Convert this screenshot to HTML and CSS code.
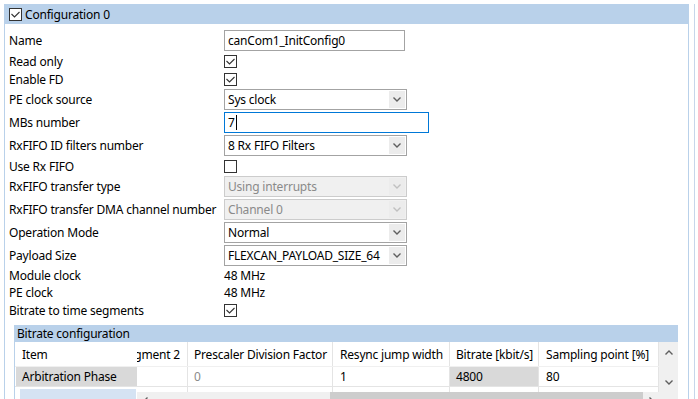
FILE: index.html
```html
<!DOCTYPE html>
<html>
    <head>
        <meta charset="utf-8">
        <title>Configuration 0</title>
        <link rel="stylesheet" href="styles.css">
    </head>
    <body>
        <div class="frame">
            <div class="section">
                <div class="section__title">
                    <span class="check is-checked"><svg viewBox="0 0 13 13"><path d="M2.5 6 L5.5 9 L10.5 4"/></svg></span>
                    <span>Configuration 0</span>
                </div>
                <div class="section__body">
                    <div class="form">
                        <div class="row">
                            <span class="row__label">Name</span>
                            <span class="field field--name">canCom1_InitConfig0</span>
                        </div>
                        <div class="row row--check">
                            <span class="row__label">Read only</span>
                            <span class="check is-checked"><svg viewBox="0 0 13 13"><path d="M2.5 6 L5.5 9 L10.5 4"/></svg></span>
                        </div>
                        <div class="row row--check">
                            <span class="row__label">Enable FD</span>
                            <span class="check is-checked"><svg viewBox="0 0 13 13"><path d="M2.5 6 L5.5 9 L10.5 4"/></svg></span>
                        </div>
                        <div class="row">
                            <span class="row__label">PE clock source</span>
                            <span class="select"><span class="select__value">Sys clock</span><span class="select__btn"><svg viewBox="0 0 8 5"><path d="M0.5 0.5 L4 4 L7.5 0.5"/></svg></span></span>
                        </div>
                        <div class="row">
                            <span class="row__label">MBs number</span>
                            <span class="field field--focus">7<i class="caret"></i></span>
                        </div>
                        <div class="row">
                            <span class="row__label">RxFIFO ID filters number</span>
                            <span class="select"><span class="select__value">8 Rx FIFO Filters</span><span class="select__btn"><svg viewBox="0 0 8 5"><path d="M0.5 0.5 L4 4 L7.5 0.5"/></svg></span></span>
                        </div>
                        <div class="row row--check">
                            <span class="row__label">Use Rx FIFO</span>
                            <span class="check"></span>
                        </div>
                        <div class="row">
                            <span class="row__label">RxFIFO transfer type</span>
                            <span class="select is-disabled"><span class="select__value">Using interrupts</span><span class="select__btn"><svg viewBox="0 0 8 5"><path d="M0.5 0.5 L4 4 L7.5 0.5"/></svg></span></span>
                        </div>
                        <div class="row">
                            <span class="row__label">RxFIFO transfer DMA channel number</span>
                            <span class="select is-disabled"><span class="select__value">Channel 0</span><span class="select__btn"><svg viewBox="0 0 8 5"><path d="M0.5 0.5 L4 4 L7.5 0.5"/></svg></span></span>
                        </div>
                        <div class="row">
                            <span class="row__label">Operation Mode</span>
                            <span class="select"><span class="select__value">Normal</span><span class="select__btn"><svg viewBox="0 0 8 5"><path d="M0.5 0.5 L4 4 L7.5 0.5"/></svg></span></span>
                        </div>
                        <div class="row">
                            <span class="row__label">Payload Size</span>
                            <span class="select"><span class="select__value">FLEXCAN_PAYLOAD_SIZE_64</span><span class="select__btn"><svg viewBox="0 0 8 5"><path d="M0.5 0.5 L4 4 L7.5 0.5"/></svg></span></span>
                        </div>
                        <div class="row row--text">
                            <span class="row__label">Module clock</span>
                            <span>48 MHz</span>
                        </div>
                        <div class="row row--text">
                            <span class="row__label">PE clock</span>
                            <span>48 MHz</span>
                        </div>
                        <div class="row row--check">
                            <span class="row__label">Bitrate to time segments</span>
                            <span class="check is-checked"><svg viewBox="0 0 13 13"><path d="M2.5 6 L5.5 9 L10.5 4"/></svg></span>
                        </div>
                    </div>

                    <div class="group">
                        <div class="group__title">Bitrate configuration</div>
                        <div class="grid">
                            <div class="grid__main">
                                <div class="grid__row grid__row--head">
                                    <span class="cell cell--frozen">Item</span>
                                    <span class="cell cell--seg2">Phase Segment 2</span>
                                    <span class="cell cell--presc">Prescaler Division Factor</span>
                                    <span class="cell cell--resync">Resync jump width</span>
                                    <span class="cell cell--bitrate">Bitrate [kbit/s]</span>
                                    <span class="cell cell--sample">Sampling point [%]</span>
                                </div>
                                <div class="grid__row grid__row--data">
                                    <span class="cell cell--frozen"><span class="cell__fill">Arbitration Phase</span></span>
                                    <span class="cell cell--seg2"></span>
                                    <span class="cell cell--presc is-readonly">0</span>
                                    <span class="cell cell--resync">1</span>
                                    <span class="cell cell--bitrate is-shaded">4800</span>
                                    <span class="cell cell--sample">80</span>
                                </div>
                                <div class="grid__row grid__row--next">
                                    <span class="cell cell--frozen"><span class="cell__sel"></span></span>
                                    <div class="grid__rest">
                                        <div class="grid__row grid__row--stub">
                                            <span class="cell cell--seg2"></span>
                                            <span class="cell cell--presc"></span>
                                            <span class="cell cell--resync"></span>
                                            <span class="cell cell--bitrate"></span>
                                            <span class="cell cell--sample"></span>
                                        </div>
                                        <div class="hscroll">
                                            <span class="hscroll__btn"><svg viewBox="0 0 5 8"><path d="M4.5 0.5 L1 4 L4.5 7.5"/></svg></span>
                                            <span class="hscroll__track"></span>
                                            <span class="hscroll__thumb"></span>
                                            <span class="hscroll__btn"><svg viewBox="0 0 5 8"><path d="M0.5 0.5 L4 4 L0.5 7.5"/></svg></span>
                                        </div>
                                    </div>
                                </div>
                            </div>
                            <div class="vscroll">
                                <span class="vscroll__btn"><svg viewBox="0 0 8 5"><path d="M0.5 4.5 L4 1 L7.5 4.5"/></svg></span>
                                <span class="vscroll__track"></span>
                                <span class="vscroll__btn"><svg viewBox="0 0 8 5"><path d="M0.5 0.5 L4 4 L7.5 0.5"/></svg></span>
                            </div>
                        </div>
                    </div>
                </div>
            </div>
            <div class="edge"></div>
        </div>
    </body>
</html>
```

FILE: styles.css
```css
:root {
    --font-main: 'Noto Sans', 'Liberation Sans', Arial, sans-serif;
    --fz-normal: 12px;

    --color-text: #000;
    --color-muted: #8a8a8a;
    --color-head: #b9d1ea;
    --color-line: #e4e4e4;
    --color-field: #a3a3a3;
    --color-focus: #0078d7;
    --color-btn: #ececec;
    --color-scroll: #f0f0f0;
    --color-thumb: #cdcdcd;
    --color-arrow: #5f5f5f;
}
* {
    box-sizing: border-box;
}
html, body {
    margin: 0;
}
body {
    font-family: var(--font-main);
    font-size: var(--fz-normal);
    letter-spacing: -0.2px;
    color: var(--color-text);
    background: #fff;
    width: 698px;
    height: 399px;
    overflow: hidden;
}
svg {
    display: block;
    fill: none;
}
.frame {
    display: flex;
    height: 399px;
    padding-top: 4px;
}
.section {
    width: 685px;
    margin-left: 4px;
    border-left: 1px solid var(--color-head);
    border-right: 1px solid var(--color-head);
}
.edge {
    width: 1px;
    margin-left: 5px;
    background: #c6d6ea;
}
.section__title {
    display: flex;
    align-items: center;
    gap: 3px;
    height: 20px;
    padding-left: 4px;
    background: var(--color-head);
}

/* checkbox */
.check {
    display: block;
    flex: none;
    width: 13px;
    height: 13px;
    border: 1px solid #333;
    background: #fff;
}
.check svg {
    width: 13px;
    height: 13px;
    margin: -1px;
}
.check path {
    stroke: #333;
    stroke-width: 1.1;
}

.section__body {
    padding: 5px 0 0 4px;
}
.row {
    display: flex;
    align-items: center;
    height: 23px;
}
.row--check {
    height: 18px;
}
.row--text {
    height: 17px;
}
.row__label {
    width: 215px;
    flex: none;
    white-space: nowrap;
}

/* text field */
.field {
    display: flex;
    align-items: center;
    width: 181px;
    height: 21px;
    padding-left: 3px;
    border: 1px solid var(--color-field);
    white-space: nowrap;
}
.field--focus {
    width: 205px;
    border-color: var(--color-focus);
}
.caret {
    display: block;
    width: 1px;
    height: 15px;
    margin-left: 1px;
    background: #000;
}

/* select */
.select {
    display: flex;
    align-items: center;
    width: 183px;
    height: 21px;
    padding: 1px;
    padding-left: 3px;
    border: 1px solid var(--color-field);
}
.select__value {
    flex: 1;
    white-space: nowrap;
    overflow: hidden;
}
.select__btn {
    display: flex;
    align-items: center;
    justify-content: center;
    width: 16px;
    height: 17px;
    background: var(--color-btn);
}
.select__btn svg {
    width: 8px;
    height: 5px;
}
.select__btn path {
    stroke: var(--color-arrow);
    stroke-width: 1.4;
}
.select.is-disabled {
    background: #f0f0f0;
    border-color: #cccccc;
    color: var(--color-muted);
}
.select.is-disabled .select__btn path {
    stroke: #c0c0c0;
}

/* group + grid */
.group {
    width: 664px;
    margin: 6px 0 0 5px;
    border-left: 1px solid var(--color-head);
}
.group__title {
    display: flex;
    align-items: center;
    height: 17px;
    padding-left: 3px;
    margin-left: -1px;
    background: var(--color-head);
}
.grid {
    display: flex;
    height: 70px;
}
.grid__main {
    width: 644px;
    display: flex;
    flex-direction: column;
}
.grid__row {
    display: flex;
    flex: none;
}
.grid__row--head {
    height: 25px;
    border-bottom: 1px solid #f0f0f0;
}
.grid__row--data {
    height: 20px;
    border-bottom: 1px solid var(--color-line);
}
.grid__rest {
    display: flex;
    flex-direction: column;
}
.grid__row--stub {
    height: 5px;
}
.cell {
    display: flex;
    align-items: center;
    flex: none;
    padding-left: 6px;
    white-space: nowrap;
    overflow: hidden;
    border-right: 1px solid var(--color-line);
}
.cell--frozen {
    width: 122px;
    padding-left: 7px;
    border-right: 0;
}
.grid__row--data .cell--frozen {
    padding-left: 1px;
}
.cell__fill {
    display: flex;
    align-items: center;
    height: 100%;
    flex: 1;
    padding-left: 6px;
    background: #d9d9d9;
}
.grid__row--next .cell--frozen {
    align-items: flex-start;
    padding: 2px 0 0 5px;
}
.cell__sel {
    display: block;
    width: 116px;
    height: 20px;
    background: #d5e3f3;
}
.cell--seg2 {
    width: 51px;
    justify-content: flex-end;
    padding: 0 7px 0 0;
}
.cell--presc {
    width: 145px;
}
.cell--resync {
    width: 117px;
    padding-left: 7px;
}
.cell--bitrate {
    width: 89px;
}
.cell--sample {
    width: 120px;
    padding-left: 7px;
}
.cell.is-readonly {
    color: var(--color-muted);
}
.cell.is-shaded {
    background: #d9d9d9;
}

/* scrollbars */
.hscroll {
    display: flex;
    width: 522px;
    height: 17px;
    background: var(--color-scroll);
}
.hscroll__btn {
    display: flex;
    align-items: center;
    justify-content: center;
    width: 16px;
}
.hscroll__btn svg {
    width: 5px;
    height: 8px;
}
.hscroll__btn path,
.vscroll__btn path {
    stroke: var(--color-arrow);
    stroke-width: 1.4;
}
.hscroll__track {
    width: 177px;
}
.hscroll__thumb {
    width: 313px;
    background: var(--color-thumb);
}
.vscroll {
    display: flex;
    flex-direction: column;
    width: 19px;
    background: var(--color-scroll);
}
.vscroll__btn {
    display: flex;
    align-items: center;
    justify-content: center;
    height: 20px;
}
.vscroll__btn svg {
    width: 8px;
    height: 5px;
}
.vscroll__track {
    height: 10px;
}
```
